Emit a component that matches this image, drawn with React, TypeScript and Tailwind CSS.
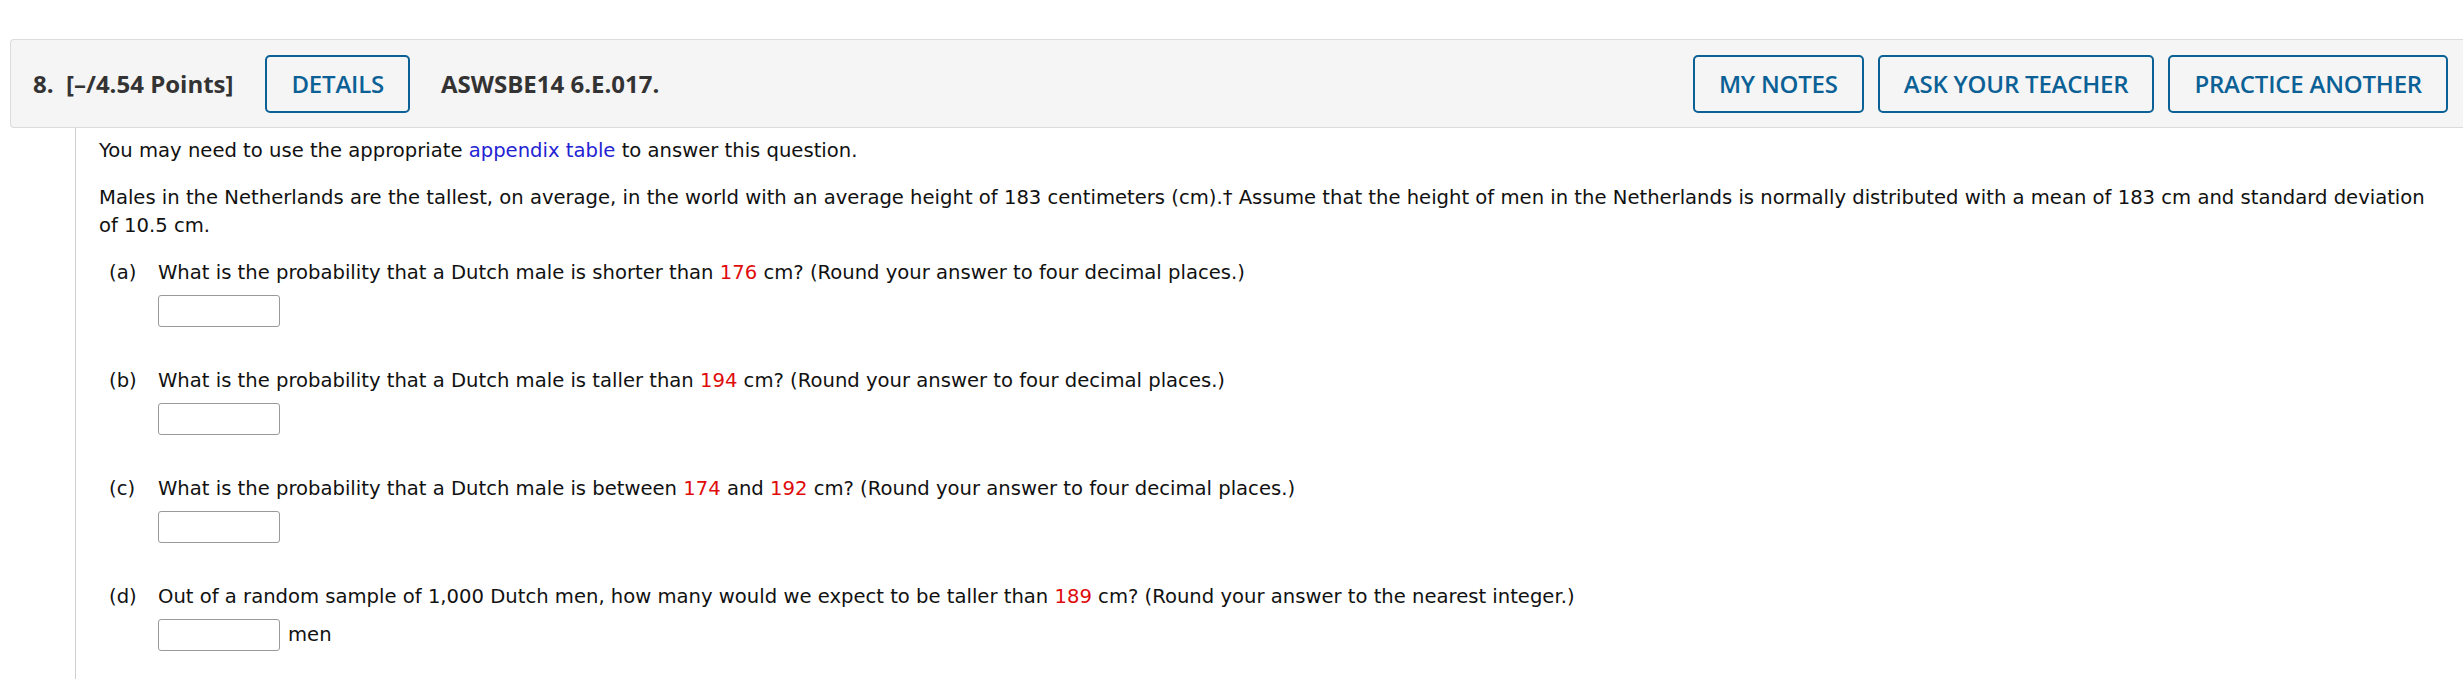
import React from "react";

const red = "text-[#e00b0b]";

function Answer({ suffix }: { suffix?: string }) {
  return (
    <div className="mt-[8px] flex items-center">
      <div className="h-[32px] w-[122px] rounded-[3px] border border-[#9a9a9a] bg-white" />
      {suffix && <span className="ml-[8px]">{suffix}</span>}
    </div>
  );
}

function Part({
  label,
  children,
  suffix,
  first,
}: {
  label: string;
  children: React.ReactNode;
  suffix?: string;
  first?: boolean;
}) {
  return (
    <div className={`flex ${first ? "mt-[19px]" : "mt-[40px]"}`}>
      <div className="w-[59px] shrink-0 pl-[10px]">{label}</div>
      <div>
        <div>{children}</div>
        <Answer suffix={suffix} />
      </div>
    </div>
  );
}

function HeaderButton({ children }: { children: React.ReactNode }) {
  return (
    <div className="flex h-[58px] items-center rounded-[5px] border-2 border-[#0b6196] px-[24px] text-[24px] font-semibold tracking-[-0.2px] text-[#0b6196]">
      {children}
    </div>
  );
}

export default function App() {
  return (
    <div className="min-h-[679px] bg-white pt-[39px]" style={{ fontFamily: '"Open Sans", sans-serif' }}>
      <div className="ml-[10px] flex h-[89px] items-center rounded-l-[4px] border-y border-l border-[#dcdcdc] bg-[#f5f5f5] pl-[22px] pr-[15px]">
        <div className="text-[24px] font-bold text-[#333]">8.&nbsp; [–/4.54 Points]</div>
        <div className="ml-[32px]">
          <HeaderButton>DETAILS</HeaderButton>
        </div>
        <div className="ml-[31px] text-[24px] font-bold text-[#333]">ASWSBE14 6.E.017.</div>
        <div className="ml-auto flex gap-[14px]">
          <HeaderButton>MY NOTES</HeaderButton>
          <HeaderButton>ASK YOUR TEACHER</HeaderButton>
          <HeaderButton>PRACTICE ANOTHER</HeaderButton>
        </div>
      </div>
      <div
        className="ml-[75px] min-h-[551px] border-l border-[#cfcfcf] pl-[23px] pr-[16px] pt-[9px] text-[19.6px] leading-[28px] text-[#111]"
        style={{ fontFamily: '"DejaVu Sans", Verdana, sans-serif' }}
      >
        <p>
          You may need to use the appropriate <span className="text-[#2323d3]">appendix table</span> to answer this question.
        </p>
        <p className="mt-[19px]">
          Males in the Netherlands are the tallest, on average, in the world with an average height of 183 centimeters (cm).† Assume that the height of men in the Netherlands is normally distributed with a mean of 183 cm and standard deviation of 10.5 cm.
        </p>
        <Part label="(a)" first>
          What is the probability that a Dutch male is shorter than <span className={red}>176</span> cm? (Round your answer to four decimal places.)
        </Part>
        <Part label="(b)">
          What is the probability that a Dutch male is taller than <span className={red}>194</span> cm? (Round your answer to four decimal places.)
        </Part>
        <Part label="(c)">
          What is the probability that a Dutch male is between <span className={red}>174</span> and <span className={red}>192</span> cm? (Round your answer to four decimal places.)
        </Part>
        <Part label="(d)" suffix="men">
          Out of a random sample of 1,000 Dutch men, how many would we expect to be taller than <span className={red}>189</span> cm? (Round your answer to the nearest integer.)
        </Part>
      </div>
    </div>
  );
}
